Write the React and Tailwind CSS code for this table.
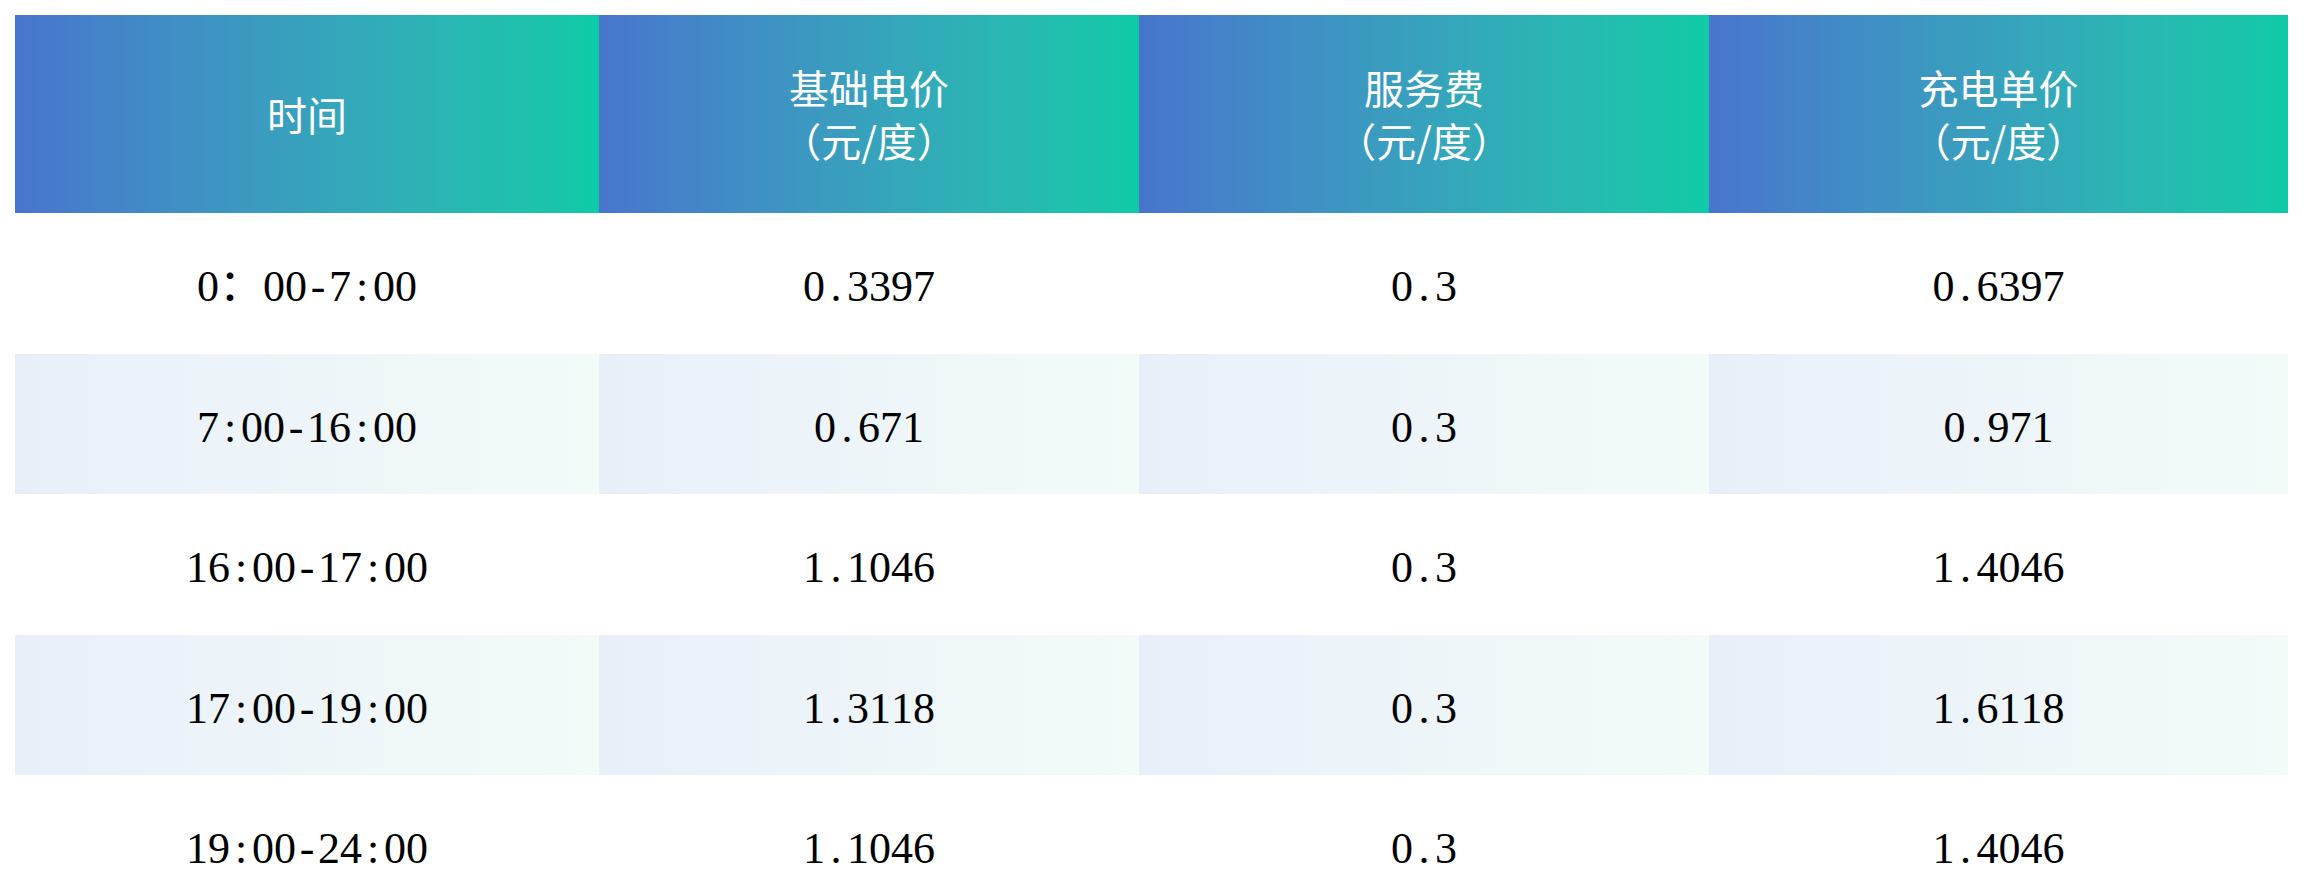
import React from "react";

const headers = [
  ["时间"],
  ["基础电价", "（元/度）"],
  ["服务费", "（元/度）"],
  ["充电单价", "（元/度）"],
];

const rows = [
  ["0：00-7:00", "0.3397", "0.3", "0.6397"],
  ["7:00-16:00", "0.671", "0.3", "0.971"],
  ["16:00-17:00", "1.1046", "0.3", "1.4046"],
  ["17:00-19:00", "1.3118", "0.3", "1.6118"],
  ["19:00-24:00", "1.1046", "0.3", "1.4046"],
];

function Mono({ text }) {
  return (
    <span className="inline-flex">
      {Array.from(text).map((ch, i) => {
        const full = ch.charCodeAt(0) > 0xff;
        return (
          <span
            key={i}
            className={full ? "inline-block w-[1em] text-center" : "inline-block w-[0.5em] text-center"}
          >
            {ch}
          </span>
        );
      })}
    </span>
  );
}

export default function App() {
  return (
    <div className="w-[2304px] h-[878px] bg-white overflow-hidden pt-[15px] pl-[15px]">
      <div className="grid grid-cols-[584px_540px_570px_579px]">
        {headers.map((h, i) => (
          <div
            key={i}
            className="h-[198px] flex flex-col items-center justify-center bg-gradient-to-r from-[#4875cd] to-[#0dcba6] text-white text-[40px] leading-[53px] font-normal"
            style={{ fontFamily: '"Noto Sans CJK SC", "Noto Sans", sans-serif' }}
          >
            {h.map((t, j) => (
              <div key={j}>{t}</div>
            ))}
          </div>
        ))}
        {rows.map((r, ri) =>
          r.map((c, ci) => (
            <div
              key={ri + "-" + ci}
              className={
                ri % 2 === 1
                  ? "h-[140.5px] flex items-center justify-center pt-[8px] bg-gradient-to-r from-[#e9eff9] to-[#f3fbf9] text-black text-[44px] leading-none"
                  : "h-[140.5px] flex items-center justify-center pt-[8px] bg-white text-black text-[44px] leading-none"
              }
              style={{ fontFamily: '"Liberation Serif", "Noto Sans CJK SC", serif' }}
            >
              <Mono text={c} />
            </div>
          ))
        )}
      </div>
    </div>
  );
}
